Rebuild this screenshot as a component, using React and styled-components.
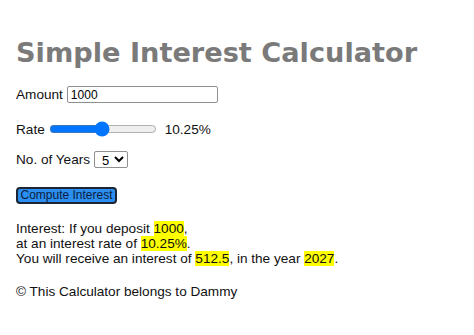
import React, { useState } from "react";
import styled, { createGlobalStyle } from "styled-components";

const GlobalStyle = createGlobalStyle`
    body {
        margin: 0;
        background: #ffffff;
        font-family: "Liberation Sans", Arial, sans-serif;
        font-size: 13.6px;
        color: #111111;
    }
`;

const Page = styled.div`
    display: flex;
    flex-direction: column;
    align-items: flex-start;
    padding: 36px 16px 0;
`;

const Title = styled.h1`
    margin: 0;
    font-family: "DejaVu Sans", Verdana, sans-serif;
    font-size: 27.2px;
    font-weight: bold;
    color: #7a7a7a;
    line-height: 33px;
`;

const Row = styled.div`
    display: flex;
    align-items: center;
    gap: ${(p) => p.gap || 4}px;
    margin-top: ${(p) => p.top}px;
    height: ${(p) => p.h || 17}px;
`;

const AmountInput = styled.input`
    box-sizing: border-box;
    width: 151px;
    height: 17px;
    padding: 0 3px;
    border: 1px solid #8f8f8f;
    border-radius: 2px;
    font-family: "Liberation Sans", Arial, sans-serif;
    font-size: 12px;
    color: #000;
    outline: none;
`;

const Slider = styled.input`
    width: 108px;
    margin: 0 4px 0 0;
    accent-color: #0075ff;
`;

const YearSelect = styled.select`
    box-sizing: border-box;
    width: 34px;
    height: 17px;
    padding: 0 0 0 3px;
    border: 1px solid #8f8f8f;
    border-radius: 2px;
    font-family: "Liberation Sans", Arial, sans-serif;
    font-size: 13px;
    background: #fff;
`;

const ComputeButton = styled.button`
    margin-top: 19px;
    box-sizing: border-box;
    width: 101px;
    height: 17px;
    padding: 0;
    background: #2a8ff0;
    border: 2px solid #1b2533;
    border-radius: 4px;
    color: #0d1b3a;
    font-family: "Liberation Sans", Arial, sans-serif;
    font-size: 12px;
    line-height: 13px;
    cursor: pointer;
`;

const Result = styled.p`
    margin: 17px 0 0;
    line-height: 15px;
`;

const Mark = styled.mark`
    background: #ffff00;
    color: inherit;
`;

const Footer = styled.p`
    margin: 18px 0 0;
    line-height: 16px;
`;

export default function App() {
    const [amount, setAmount] = useState("1000");
    const [rate, setRate] = useState(10.25);
    const [years, setYears] = useState("5");

    const interest = (Number(amount) * rate * Number(years)) / 100;

    return (
        <>
            <GlobalStyle />
            <Page>
                <Title>Simple Interest Calculator</Title>
                <Row top={17}>
                    <span>Amount</span>
                    <AmountInput value={amount} onChange={(e) => setAmount(e.target.value)} />
                </Row>
                <Row top={18} h={16} gap={4}>
                    <span>Rate</span>
                    <Slider type="range" min="1" max="20" step="0.25" value={rate} onChange={(e) => setRate(Number(e.target.value))} />
                    <span>{rate}%</span>
                </Row>
                <Row top={14}>
                    <span>No. of Years</span>
                    <YearSelect value={years} onChange={(e) => setYears(e.target.value)}>
                        {[1, 2, 3, 4, 5, 6, 7, 8, 9, 10].map((y) => (
                            <option key={y} value={y}>{y}</option>
                        ))}
                    </YearSelect>
                </Row>
                <ComputeButton>Compute Interest</ComputeButton>
                <Result>
                    Interest: If you deposit <Mark>{amount}</Mark>,<br />
                    at an interest rate of <Mark>{rate}%</Mark>.<br />
                    You will receive an interest of <Mark>{interest}</Mark>, in the year <Mark>{2022 + Number(years)}</Mark>.
                </Result>
                <Footer>© This Calculator belongs to Dammy</Footer>
            </Page>
        </>
    );
}
